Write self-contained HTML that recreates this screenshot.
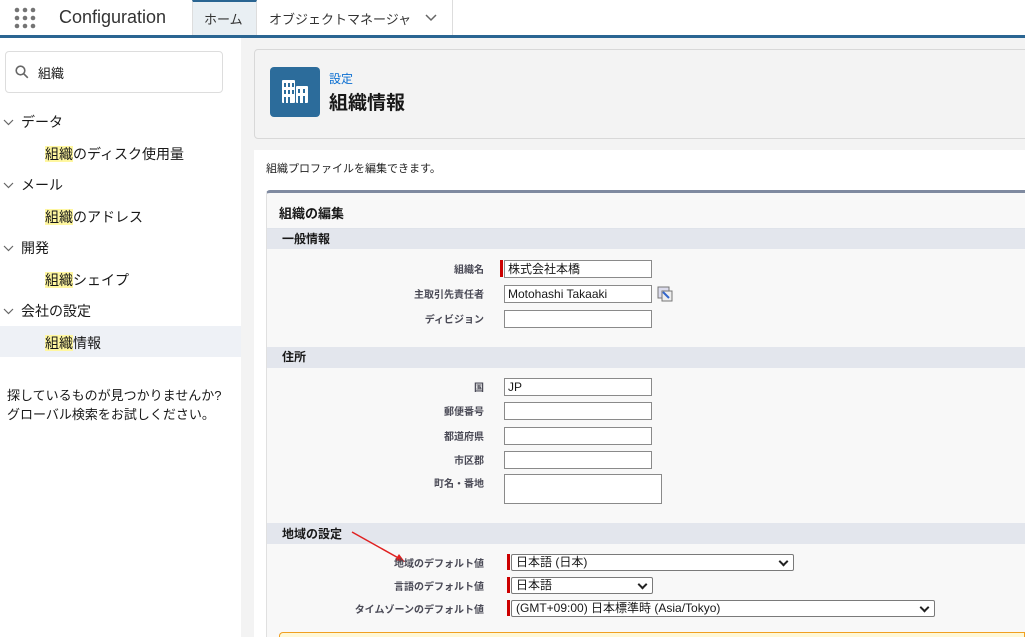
<!DOCTYPE html>
<html><head><meta charset="utf-8"><style>
*{box-sizing:border-box;margin:0;padding:0}
html,body{width:1025px;height:637px;overflow:hidden}
body{background:#fff;font-family:"Liberation Sans","Noto Sans CJK JP",sans-serif;color:#181818;position:relative}
.a{position:absolute}
.hl{background:#fff7a0}
.side{font-size:14px}
.lbl{position:absolute;font-size:10px;font-weight:bold;color:#4a4a56;text-align:right;width:200px;left:284px}
.inp{position:absolute;border:1px solid #8a8a8a;background:#fff;height:18px;font-size:12px;padding:1px 3px;line-height:14px}
.req{position:absolute;width:3px;background:#c00}
.sec{position:absolute;left:267px;width:758px;background:#e3e6ed;font-size:12px;font-weight:bold;padding-left:15px}
.sel{position:absolute;border:1px solid #7a7a7a;background:#fff;height:17px;font-size:12px;padding:0 4px;line-height:15px;border-radius:2px}
.sel:after{content:"";position:absolute;right:6px;top:3px;width:5px;height:5px;border-right:2px solid #222;border-bottom:2px solid #222;transform:rotate(45deg)}
</style></head><body>
<div class="a" style="left:0;top:35px;width:1025px;height:3px;background:#2a6592"></div>
<svg class="a" style="left:14px;top:7px" width="24" height="22"><g fill="#747474"><circle cx="3" cy="3" r="2.3"/><circle cx="11" cy="3" r="2.3"/><circle cx="19" cy="3" r="2.3"/><circle cx="3" cy="11" r="2.3"/><circle cx="11" cy="11" r="2.3"/><circle cx="19" cy="11" r="2.3"/><circle cx="3" cy="19" r="2.3"/><circle cx="11" cy="19" r="2.3"/><circle cx="19" cy="19" r="2.3"/></g></svg>
<div class="a" style="left:59px;top:7px;font-size:18px;color:#333">Configuration</div>
<div class="a" style="left:192px;top:0;width:65px;height:35px;background:#e9eff3;border-top:2px solid #2a6592;border-left:1px solid #ddd;border-right:1px solid #ddd"></div>
<div class="a" style="left:204px;top:9px;font-size:13px;color:#333">ホーム</div>
<div class="a" style="left:269px;top:9px;font-size:13px;color:#333">オブジェクトマネージャ</div>
<svg class="a" style="left:425px;top:14px" width="12" height="8"><path d="M1 1l5 5 5-5" stroke="#666" stroke-width="1.5" fill="none"/></svg>
<div class="a" style="left:452px;top:0;width:1px;height:35px;background:#ddd"></div>
<!-- sidebar -->
<div class="a" style="left:5px;top:51px;width:218px;height:42px;border:1px solid #ddd;border-radius:4px"></div>
<svg class="a" style="left:15px;top:65px" width="14" height="14"><circle cx="5.5" cy="5.5" r="4.3" stroke="#666" stroke-width="1.6" fill="none"/><path d="M8.8 8.8l4 4" stroke="#666" stroke-width="1.6"/></svg>
<div class="a side" style="left:38px;top:63px;font-size:13px">組織</div>
<svg class="a" style="left:3px;top:119px" width="11" height="7"><path d="M1 1l4.5 4.5L10 1" stroke="#666" stroke-width="1.2" fill="none"/></svg>
<div class="a side" style="left:21px;top:112px">データ</div>
<div class="a side" style="left:45px;top:144px"><span class="hl">組織</span>のディスク使用量</div>
<svg class="a" style="left:3px;top:182px" width="11" height="7"><path d="M1 1l4.5 4.5L10 1" stroke="#666" stroke-width="1.2" fill="none"/></svg>
<div class="a side" style="left:21px;top:175px">メール</div>
<div class="a side" style="left:45px;top:207px"><span class="hl">組織</span>のアドレス</div>
<svg class="a" style="left:3px;top:245px" width="11" height="7"><path d="M1 1l4.5 4.5L10 1" stroke="#666" stroke-width="1.2" fill="none"/></svg>
<div class="a side" style="left:21px;top:238px">開発</div>
<div class="a side" style="left:45px;top:270px"><span class="hl">組織</span>シェイプ</div>
<svg class="a" style="left:3px;top:308px" width="11" height="7"><path d="M1 1l4.5 4.5L10 1" stroke="#666" stroke-width="1.2" fill="none"/></svg>
<div class="a side" style="left:21px;top:301px">会社の設定</div>
<div class="a" style="left:0;top:326px;width:241px;height:31px;background:#eef1f6"></div>
<div class="a side" style="left:45px;top:333px"><span class="hl">組織</span>情報</div>
<div class="a side" style="left:7px;top:386px;font-size:13px;line-height:19px">探しているものが見つかりませんか?<br>グローバル検索をお試しください。</div>
<!-- main -->
<div class="a" style="left:241px;top:38px;width:784px;height:599px;background:#f3f3f3"></div>
<div class="a" style="left:254px;top:49px;width:780px;height:90px;background:#f3f3f3;border:1px solid #d8d8d8;border-radius:4px"></div>
<div class="a" style="left:270px;top:67px;width:50px;height:50px;background:#2c6c9b;border-radius:4px"></div>
<svg class="a" style="left:281px;top:78px" width="28" height="28"><g fill="#fff"><rect x="1" y="2" width="13" height="23" rx="1"/><rect x="15" y="8" width="12" height="17" rx="1"/></g><g fill="#2c6c9b"><rect x="3" y="5" width="2" height="4"/><rect x="7" y="5" width="2" height="4"/><rect x="11" y="5" width="2" height="4"/><rect x="3" y="12" width="2" height="4"/><rect x="7" y="12" width="2" height="4"/><rect x="11" y="12" width="2" height="4"/><rect x="3" y="19" width="2" height="6"/><rect x="7" y="19" width="2" height="6"/><rect x="17" y="11" width="2" height="4"/><rect x="22" y="11" width="2" height="4"/><rect x="17" y="18" width="2" height="7"/><rect x="22" y="18" width="2" height="7"/></g></svg>
<div class="a" style="left:329px;top:70px;font-size:12px;color:#0a6ed1">設定</div>
<div class="a" style="left:329px;top:88px;font-size:19px;font-weight:bold">組織情報</div>
<div class="a" style="left:254px;top:150px;width:771px;height:487px;background:#fff"></div>
<div class="a" style="left:266px;top:160px;font-size:11px;color:#222">組織プロファイルを編集できます。</div>
<div class="a" style="left:266px;top:190px;width:759px;height:447px;background:#f8f8f8;border-top:3px solid #7f8aa0;border-left:1px solid #e0e0e0;border-radius:4px 0 0 0"></div>
<div class="a" style="left:279px;top:203px;font-size:13px;font-weight:bold">組織の編集</div>
<div class="a" style="left:267px;top:228px;width:758px;height:1px;background:#dfe3ea"></div>
<div class="sec" style="top:229px;height:20px;line-height:20px">一般情報</div>
<div class="lbl" style="top:261px">組織名</div><div class="req" style="left:500px;top:260px;height:17px"></div><div class="inp" style="left:504px;top:260px;width:148px">株式会社本橋</div>
<div class="lbl" style="top:286px">主取引先責任者</div><div class="inp" style="left:504px;top:285px;width:148px">Motohashi Takaaki</div>
<svg class="a" style="left:657px;top:286px" width="16" height="16"><rect x="1" y="1" width="11" height="11" fill="#dde" stroke="#777"/><rect x="5" y="5" width="10" height="10" fill="#eee" stroke="#777"/><path d="M6 6l6 6" stroke="#36c" stroke-width="2"/></svg>
<div class="lbl" style="top:311px">ディビジョン</div><div class="inp" style="left:504px;top:310px;width:148px"></div>
<div class="sec" style="top:347px;height:21px;line-height:21px">住所</div>
<div class="lbl" style="top:379px">国</div><div class="inp" style="left:504px;top:378px;width:148px">JP</div>
<div class="lbl" style="top:403px">郵便番号</div><div class="inp" style="left:504px;top:402px;width:148px"></div>
<div class="lbl" style="top:428px">都道府県</div><div class="inp" style="left:504px;top:427px;width:148px"></div>
<div class="lbl" style="top:452px">市区郡</div><div class="inp" style="left:504px;top:451px;width:148px"></div>
<div class="lbl" style="top:475px">町名・番地</div><div class="inp" style="left:504px;top:474px;width:158px;height:30px"></div>
<div class="sec" style="top:523px;height:21px;line-height:22px">地域の設定</div>
<svg class="a" style="left:350px;top:530px" width="60" height="35"><path d="M2 2L52 30" stroke="#e02020" stroke-width="1.5"/><path d="M55 32l-10-2 4-6z" fill="#e02020"/></svg>
<div class="lbl" style="top:555px">地域のデフォルト値</div><div class="req" style="left:507px;top:554px;height:16px"></div><div class="sel" style="left:511px;top:554px;width:283px">日本語 (日本)</div>
<div class="lbl" style="top:578px">言語のデフォルト値</div><div class="req" style="left:507px;top:577px;height:16px"></div><div class="sel" style="left:511px;top:577px;width:142px">日本語</div>
<div class="lbl" style="top:601px">タイムゾーンのデフォルト値</div><div class="req" style="left:507px;top:600px;height:16px"></div><div class="sel" style="left:511px;top:600px;width:424px">(GMT+09:00) 日本標準時 (Asia/Tokyo)</div>
<div class="a" style="left:279px;top:632px;width:746px;height:5px;background:#fff8d6;border:1px solid #f0a020;border-bottom:none;border-radius:4px 0 0 0"></div>
</body></html>
